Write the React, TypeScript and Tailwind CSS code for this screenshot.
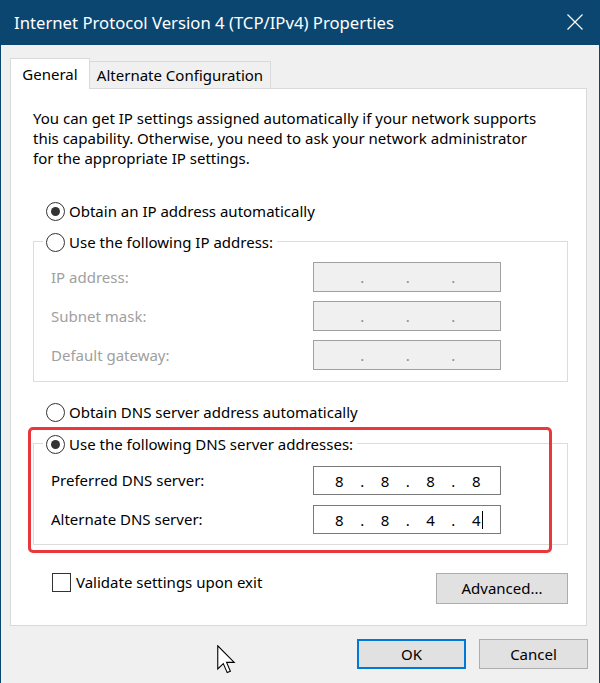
import React from "react";

const Radio = ({ checked }: { checked?: boolean }) => (
  <span className="flex h-[19px] w-[19px] shrink-0 items-center justify-center rounded-full border border-[#333333] bg-white">
    {checked && <span className="h-[9px] w-[9px] rounded-full bg-[#333333]" />}
  </span>
);

const RadioRow = ({ label, checked }: { label: string; checked?: boolean }) => (
  <div className="flex h-[20px] items-center gap-[4px]">
    <Radio checked={checked} />
    <span>{label}</span>
  </div>
);

// 4 octets split by dots, laid on a fixed 7 column grid like the Windows control
const IpBox = ({ parts, disabled, caret }: { parts: string[]; disabled?: boolean; caret?: boolean }) => {
  const cells: string[] = [];
  parts.forEach((p, i) => {
    cells.push(p);
    if (i < parts.length - 1) cells.push(".");
  });
  return (
    <div
      className={
        disabled
          ? "grid h-[30px] w-[188px] grid-cols-[repeat(7,22.8px)] items-center border border-[#a0a0a0] bg-[#f0f0f0] pl-[14px] text-[#8a8a9a]"
          : "grid h-[29px] w-[188px] grid-cols-[repeat(7,22.8px)] items-center border border-[#7a7a7a] bg-white pl-[14px] text-black"
      }
    >
      {cells.map((c, i) => (
        <span key={i} className="text-center leading-[20px]">
          <span className="relative">
            {c}
            {caret && i === cells.length - 1 && (
              <span className="absolute -right-[3px] top-[1px] h-[18px] w-px bg-black" />
            )}
          </span>
        </span>
      ))}
    </div>
  );
};

const FieldRow = ({ label, children, disabled }: { label: string; children: React.ReactNode; disabled?: boolean }) => (
  <div className="flex items-center">
    <span className={disabled ? "w-[262px] text-[#a0a0a0]" : "w-[262px] text-black"}>{label}</span>
    {children}
  </div>
);

export default function App() {
  return (
    <div className="relative flex h-[683px] w-[600px] flex-col border-x border-[#0b4670] bg-[#f0f0f0] font-['Noto_Sans',sans-serif] text-[15px] text-black">
      {/* title bar */}
      <div className="flex h-[45px] shrink-0 items-center justify-between bg-[#0b4670] pl-[13px] pr-[16px] text-white">
        <span className="text-[16.7px]">Internet Protocol Version 4 (TCP/IPv4) Properties</span>
        <svg width="16" height="16" viewBox="0 0 16 16" className="mt-[-2px]">
          <path d="M0.5 0.5 L15.5 15.5 M15.5 0.5 L0.5 15.5" stroke="white" strokeWidth="1.2" fill="none" />
        </svg>
      </div>

      {/* tabs */}
      <div className="ml-[9px] mt-[13px] flex items-end">
        <div className="relative z-10 -mb-px flex h-[31px] w-[80px] items-center justify-center border border-b-0 border-[#d9d9d9] bg-white">
          General
        </div>
        <div className="-ml-px flex h-[27px] w-[182px] items-center justify-center border border-b-0 border-[#d9d9d9] bg-[#f0f0f0]">
          Alternate Configuration
        </div>
      </div>

      {/* tab panel */}
      <div className="ml-[9px] flex h-[538px] w-[577px] flex-col border border-[#d9d9d9] bg-white">
        <p className="ml-[22px] mt-[19px] whitespace-nowrap leading-[20px]">
          You can get IP settings assigned automatically if your network supports
          <br />
          this capability. Otherwise, you need to ask your network administrator
          <br />
          for the appropriate IP settings.
        </p>

        <div className="ml-[35px] mt-[33px]">
          <RadioRow label="Obtain an IP address automatically" checked />
        </div>

        <div className="ml-[22px] mt-[20px] w-[535px] border border-[#dcdcdc] pb-[11px] pl-[17px]">
          <div className="-ml-[8px] -mt-[10px] w-fit bg-white pl-[3px] pr-[4px]">
            <RadioRow label="Use the following IP address:" />
          </div>
          <div className="mt-[10px] flex flex-col gap-[9px]">
            <FieldRow label="IP address:" disabled>
              <IpBox parts={["", "", "", ""]} disabled />
            </FieldRow>
            <FieldRow label="Subnet mask:" disabled>
              <IpBox parts={["", "", "", ""]} disabled />
            </FieldRow>
            <FieldRow label="Default gateway:" disabled>
              <IpBox parts={["", "", "", ""]} disabled />
            </FieldRow>
          </div>
        </div>

        <div className="ml-[35px] mt-[20px]">
          <RadioRow label="Obtain DNS server address automatically" />
        </div>

        <div className="ml-[22px] mt-[21px] w-[535px] border border-[#dcdcdc] pb-[10px] pl-[17px]">
          <div className="-ml-[8px] -mt-[10px] w-fit bg-white pl-[3px] pr-[4px]">
            <RadioRow label="Use the following DNS server addresses:" checked />
          </div>
          <div className="mt-[12px] flex flex-col gap-[10px]">
            <FieldRow label="Preferred DNS server:">
              <IpBox parts={["8", "8", "8", "8"]} />
            </FieldRow>
            <FieldRow label="Alternate DNS server:">
              <IpBox parts={["8", "8", "4", "4"]} caret />
            </FieldRow>
          </div>
        </div>

        <div className="mt-[27px] flex items-start justify-between pl-[41px] pr-[18px]">
          <label className="flex h-[20px] items-center gap-[5px]">
            <span className="h-[19px] w-[19px] border border-[#333333] bg-white" />
            <span>Validate settings upon exit</span>
          </label>
          <button className="mt-px flex h-[31px] w-[132px] items-center justify-center border border-[#adadad] bg-[#e1e1e1]">
            Advanced...
          </button>
        </div>
      </div>

      {/* dialog buttons */}
      <div className="mr-[11px] mt-[13px] flex justify-end gap-[13px]">
        <button className="flex h-[30px] w-[109px] items-center justify-center border-2 border-[#0078d7] bg-[#e1e1e1]">
          OK
        </button>
        <button className="flex h-[30px] w-[109px] items-center justify-center border border-[#adadad] bg-[#e1e1e1]">
          Cancel
        </button>
      </div>

      {/* highlight annotation */}
      <div className="pointer-events-none absolute left-[27px] top-[427px] h-[126px] w-[524px] rounded-[5px] border-[3px] border-[#e8383c]" />

      {/* mouse pointer */}
      <svg className="pointer-events-none absolute left-[216px] top-[645px]" width="19" height="29" viewBox="0 0 19 29">
        <path
          d="M0.75 0.75 L0.75 24 L6.3 18.6 L10.2 27.6 L13.4 26.2 L9.6 17.4 L17.2 17.4 Z"
          fill="white"
          stroke="black"
          strokeWidth="1.1"
          strokeLinejoin="miter"
        />
      </svg>
    </div>
  );
}
